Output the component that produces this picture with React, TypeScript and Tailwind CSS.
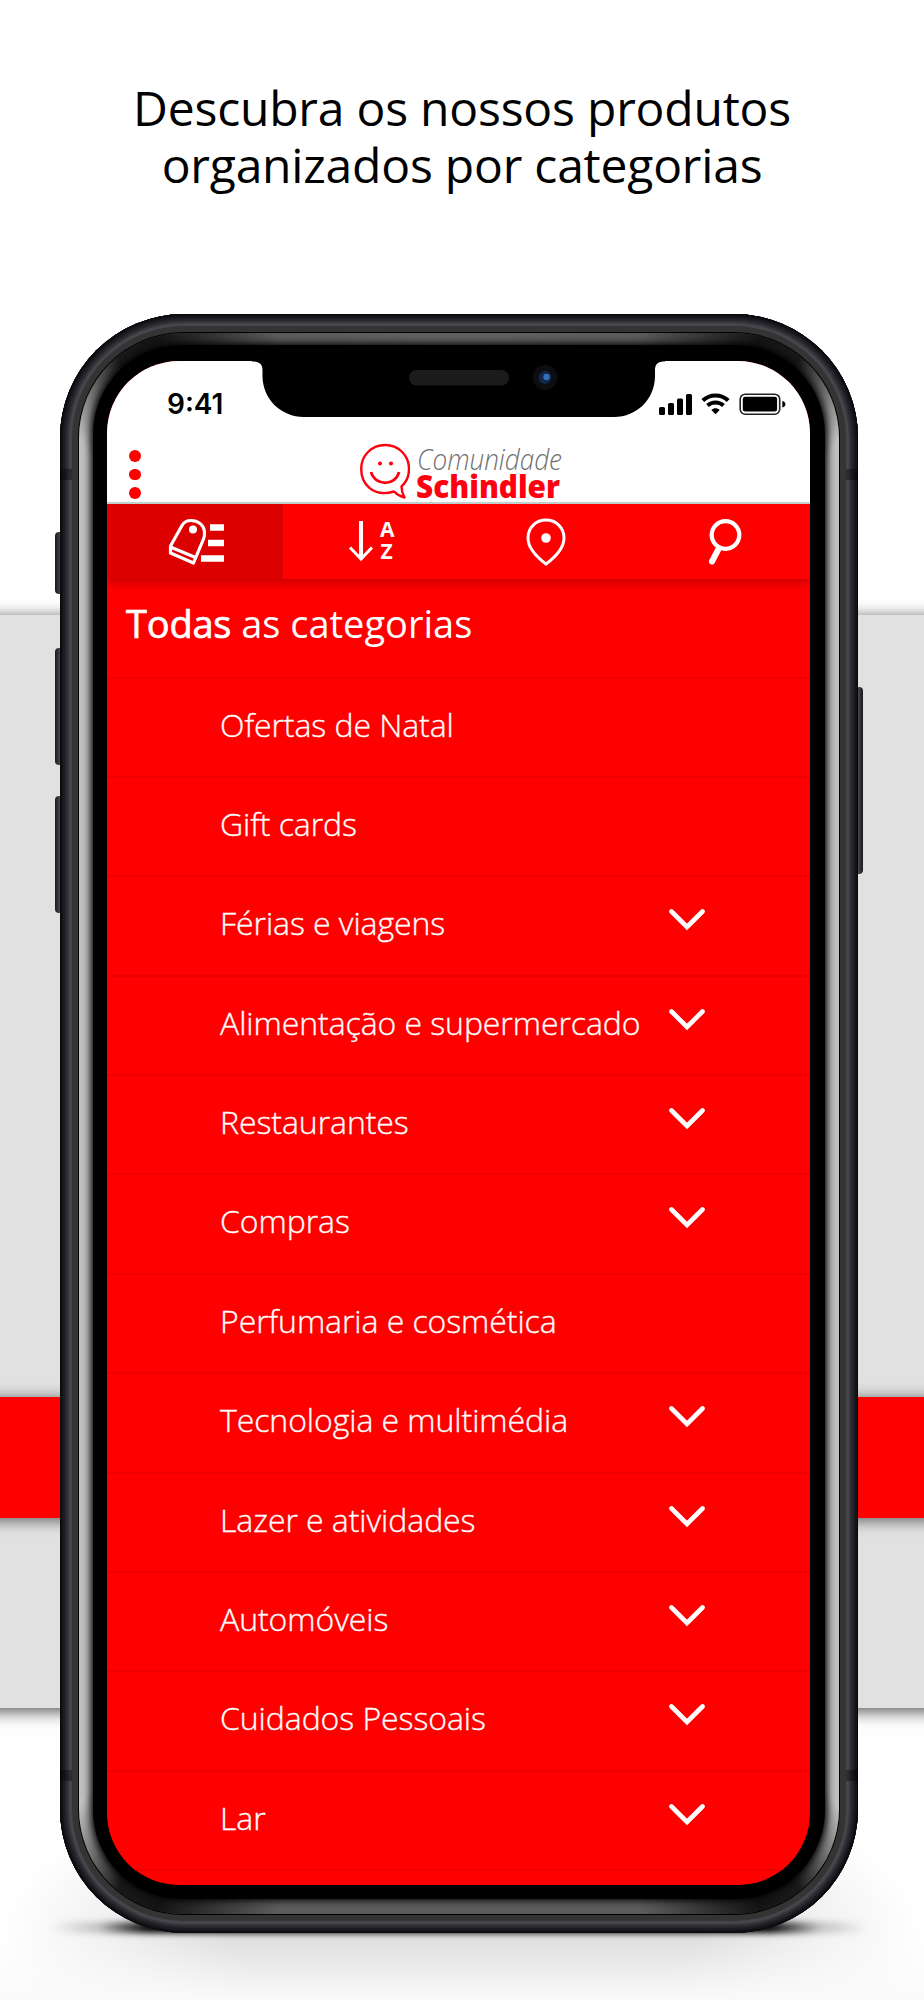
import React from 'react'

type Category = { name: string; expandable?: boolean }

const categories: Category[] = [
  { name: 'Ofertas de Natal' },
  { name: 'Gift cards' },
  { name: 'Férias e viagens', expandable: true },
  { name: 'Alimentação e supermercado', expandable: true },
  { name: 'Restaurantes', expandable: true },
  { name: 'Compras', expandable: true },
  { name: 'Perfumaria e cosmética' },
  { name: 'Tecnologia e multimédia', expandable: true },
  { name: 'Lazer e atividades', expandable: true },
  { name: 'Automóveis', expandable: true },
  { name: 'Cuidados Pessoais', expandable: true },
  { name: 'Lar', expandable: true },
]

const Notch: React.FC = () => (
  <svg className="absolute left-[145px] top-0" width="413" height="57" viewBox="0 0 413 57">
    <path d="M0 0H413V0.5C406 0.5 403 3 403 9V15C403 38 385 56 362 56H52C29 56 10.500 38 10.500 15V9C10.500 3 7 0.500 0 0.500Z" fill="#000" />
    <rect x="157" y="9" width="100" height="15.500" rx="7.750" fill="#1b1b1b" />
    <circle cx="293" cy="16.500" r="12.500" fill="#0c0d10" />
    <circle cx="293" cy="16.500" r="6.500" fill="#12264a" />
    <circle cx="294.500" cy="16" r="3.200" fill="#2f70b8" />
  </svg>
)

const StatusIcons: React.FC = () => (
  <svg width="128" height="24" viewBox="0 0 128 24" fill="#000">
    <rect x="0" y="14" width="6" height="8" rx="1.500" />
    <rect x="9" y="10" width="6" height="12" rx="1.500" />
    <rect x="18" y="5.500" width="6" height="16.500" rx="1.500" />
    <rect x="27" y="1" width="6" height="21" rx="1.500" />
    <path d="M43.800 7.500C51 .8 62 .8 69.200 7.500" fill="none" stroke="#000" strokeWidth="4.200" />
    <path d="M48.500 12.500C53 8.500 60 8.500 64.500 12.500" fill="none" stroke="#000" strokeWidth="4" />
    <path d="M52.300 17C54.800 14.800 58.200 14.800 60.700 17L56.500 21.200Z" />
    <rect x="81.200" y="1.200" width="39.500" height="20" rx="5" fill="none" stroke="#222" strokeWidth="1.600" />
    <rect x="83.800" y="3.800" width="34.300" height="14.800" rx="2.500" />
    <path d="M123.300 8C127.500 9 127.500 13.500 123.300 14.500Z" />
  </svg>
)

const Logo: React.FC = () => (
  <div className="flex gap-1.5">
    <svg className="mt-0.5" width="50" height="56" viewBox="0 0 50 56" fill="none" stroke="#ff0010" strokeWidth="2.400">
      <path d="M34 48.500C12 55 1.200 40 1.200 26C1.200 12 12 2 25.200 2C38 2 49 12 49 26C49 34 46 39.500 41.500 43.500C41.500 48 42.500 51 44.500 54.500C40 53.500 37 51.500 34 48.500Z" strokeLinejoin="round" />
      <path d="M11 29C15 43.500 35.500 43.500 39 29" strokeWidth="2.800" />
      <circle cx="20" cy="20.500" r="2" fill="#ff0010" stroke="none" />
      <circle cx="31" cy="20.500" r="2" fill="#ff0010" stroke="none" />
    </svg>
    <svg className="overflow-visible" width="150" height="60" viewBox="0 0 150 60">
      <text x="1" y="29" textLength="145" lengthAdjust="spacingAndGlyphs" className="fill-[#707070] font-['Open_Sans'] text-[29px] font-light italic">Comunidade</text>
      <text x="0" y="57" textLength="144" lengthAdjust="spacingAndGlyphs" className="fill-[#ff0010] font-['Open_Sans'] text-[31px] font-extrabold">Schindler</text>
    </svg>
  </div>
)

const TagsIcon: React.FC = () => (
  <svg width="56" height="48" viewBox="0 0 56 48" fill="none" stroke="#fff" strokeWidth="3.200">
    <path d="M2.500 28L14 7.500C16 4 19 2.500 23 2.500C30 2.500 36 7 36.500 14C36.700 17 36.500 19 35.500 21L25.500 45L2.500 35Z" strokeLinejoin="round" />
    <path d="M2.500 29L27.500 39.500" />
    <circle cx="25" cy="11.500" r="4" fill="#fff" stroke="none" />
    <path d="M42 9.500H56M40 25H56M33 40.500H56" strokeWidth="6.500" />
  </svg>
)

const SortIcon: React.FC = () => (
  <svg className="overflow-visible" width="47" height="42" viewBox="0 0 47 42" fill="none" stroke="#fff" strokeWidth="3">
    <path d="M12 0V38" strokeWidth="4" />
    <path d="M1 26.500L12 38L23 26.500" />
    <text x="31" y="15.500" className="fill-white stroke-none font-['Open_Sans'] text-[21px] font-bold">A</text>
    <text x="31.500" y="37.500" className="fill-white stroke-none font-['Open_Sans'] text-[21px] font-bold">Z</text>
  </svg>
)

const PinIcon: React.FC = () => (
  <svg width="40" height="48" viewBox="0 0 40 48" fill="none" stroke="#fff" strokeWidth="3">
    <path d="M20 46C10 38.500 2 29 2 20C2 9.500 10 2 20 2C30 2 38 9.500 38 20C38 29 30 38.500 20 46Z" />
    <circle cx="20" cy="20" r="4.800" fill="#fff" stroke="none" />
  </svg>
)

const SearchIcon: React.FC = () => (
  <svg width="34" height="48" viewBox="0 0 34 48" fill="none" stroke="#fff">
    <circle cx="17.500" cy="17" r="13.800" strokeWidth="4.200" />
    <path d="M10.500 31L4 43.500" strokeWidth="6" strokeLinecap="round" />
  </svg>
)

const Chevron: React.FC = () => (
  <svg width="36" height="22" viewBox="0 0 36 22" fill="none" stroke="#fff" strokeWidth="4.600">
    <path d="M2.500 2.500L18 18L33.500 2.500" strokeLinecap="round" />
  </svg>
)

const CategoryRow: React.FC<{ category: Category }> = ({ category }) => (
  <div className="flex h-[99.4px] shrink-0 items-start justify-between border-t-2 border-[#ee0000] pl-[113px] pr-[105px]">
    <p className="pt-[24px] text-[32px] font-light leading-[44px] tracking-[-0.07px] whitespace-nowrap [-webkit-text-stroke:0.35px_white]">{category.name}</p>
    {category.expandable && <div className="pt-[32px]"><Chevron /></div>}
  </div>
)

const Screen: React.FC = () => (
  <div className="relative flex h-[1524px] w-[703px] flex-col overflow-hidden rounded-[72px] bg-[#ff0000] text-white">
    <div className="flex h-[143px] shrink-0 flex-col border-b-2 border-[#c9d6d6] bg-white">
      <div className="flex h-[80px] items-start justify-between pl-[60px] pr-[23px]">
        <p className="pt-[26px] font-['Inter'] text-[28px] font-semibold leading-[34px] text-black">9:41</p>
        <div className="pt-[32px]"><StatusIcons /></div>
      </div>
      <div className="flex items-start">
        <div className="flex w-[253px] flex-col gap-[7px] pl-[22px] pt-[9px]">
          <span className="size-[11.5px] rounded-full bg-[#ff0000]" />
          <span className="size-[11.5px] rounded-full bg-[#ff0000]" />
          <span className="size-[11.5px] rounded-full bg-[#ff0000]" />
        </div>
        <Logo />
      </div>
    </div>
    <div className="z-10 grid h-[75px] shrink-0 grid-cols-4 bg-[#ff0000] shadow-[0_4px_9px_rgba(0,0,0,0.22)]">
      <div className="flex bg-[#dc0000] pl-[61px] pt-[14px]"><TagsIcon /></div>
      <div className="flex pl-[66px] pt-[17px]"><SortIcon /></div>
      <div className="flex pl-[67px] pt-[14px]"><PinIcon /></div>
      <div className="flex pl-[74px] pt-[14px]"><SearchIcon /></div>
    </div>
    <div className="h-[97.5px] shrink-0 pl-[19px] pt-[18px] text-[38px] leading-[52px] whitespace-nowrap">
      <span className="tracking-[-0.2px] [-webkit-text-stroke:0.7px_white]">Todas</span> as categorias
    </div>
    {categories.map((category) => <CategoryRow key={category.name} category={category} />)}
    <div className="border-t-2 border-[#ee0000]" />
    <Notch />
  </div>
)

const Phone: React.FC = () => (
  <div className="relative h-[1619px] w-[798px]">
    {/* side buttons */}
    <div className="absolute -left-[5px] top-[218px] h-[62px] w-3 rounded-l-sm bg-linear-to-r from-[#18191c] via-[#4c4c52] to-[#18191c]" />
    <div className="absolute -left-[5px] top-[334px] h-[117px] w-3 rounded-l-sm bg-linear-to-r from-[#18191c] via-[#55555b] to-[#18191c]" />
    <div className="absolute -left-[5px] top-[482px] h-[117px] w-3 rounded-l-sm bg-linear-to-r from-[#18191c] via-[#55555b] to-[#18191c]" />
    <div className="absolute -right-[5px] top-[373px] h-[187px] w-3 rounded-r-sm bg-linear-to-l from-[#18191c] via-[#55555b] to-[#18191c]" />

    {/* steel band, then the glass bevel, then the black bezel */}
    <div className="relative h-full rounded-[124px] bg-[#333534] p-[19px] shadow-[inset_0_0_0_1px_#08080c,inset_0_0_0_3px_#121216,inset_0_0_0_5px_#1c1c22,inset_0_0_0_7px_#26262c,inset_0_0_0_9px_#343439,inset_0_0_0_12px_#45454b]">
      <div className="h-full rounded-[105px] bg-[conic-gradient(#606060_0deg,#5a5a5a_13deg,#141414_21deg,#1a1a1a_24deg,#c0c0c0_29deg,#c0c0c0_151deg,#1a1a1a_156deg,#141414_159deg,#5c5c5c_167deg,#5c5c5c_193deg,#141414_201deg,#1a1a1a_204deg,#c0c0c0_209deg,#c0c0c0_331deg,#1a1a1a_336deg,#141414_339deg,#5a5a5a_347deg,#606060_360deg)] px-[14px] pt-[12px] pb-[15px] shadow-[0_0_0_1px_#000]">
        <div className="h-full rounded-[89px] bg-black px-[14px] pt-[16px] pb-[13px] shadow-[-3px_0_9px_-1px_#000,3px_0_9px_-1px_#000]">
          <Screen />
        </div>
      </div>
    </div>
    <div className="absolute left-0 top-[155px] h-[11px] w-3 bg-black/35" />
    <div className="absolute right-0 top-[155px] h-[11px] w-3 bg-black/35" />
    <div className="absolute left-0 top-[1456px] h-[11px] w-3 bg-black/35" />
    <div className="absolute right-0 top-[1456px] h-[11px] w-3 bg-black/35" />
  </div>
)

const Backdrop: React.FC = () => (
  <div className="absolute inset-0 flex flex-col pt-[615px]">
    <div className="-mx-8 flex h-[1093px] shrink-0 flex-col bg-[#e1e1e1] pt-[782px] shadow-[0_3px_16px_rgba(0,0,0,0.7)]">
      <div className="h-[121px] bg-[#ff0000] shadow-[0_2px_14px_rgba(0,0,0,0.6)]" />
    </div>
    <div className="relative flex-1">
      <div className="absolute inset-x-0 top-[40px] h-[252px] bg-[radial-gradient(ellipse_50%_70%_at_50%_74%,#dcdcdc_50%,#f3f3f3_80%,transparent)]" />
      <div className="absolute inset-x-0 top-[225px] h-[67px] bg-linear-to-b from-transparent to-[#fafafa]" />
      <div className="absolute left-[50px] top-[214px] h-[11px] w-[818px] bg-[linear-gradient(to_right,transparent,rgba(0,0,0,0.2)_6%,#000_12%,#000_88%,rgba(0,0,0,0.2)_94%,transparent)] blur-[3px]" />
    </div>
  </div>
)

const App: React.FC = () => {
  return (
    <div className="relative h-[2000px] w-[924px] overflow-hidden bg-white font-['Open_Sans',sans-serif]">
      <Backdrop />
      <div className="relative flex flex-col">
        <h1 className="flex h-[314px] flex-col items-center pt-[80px] text-[48px] leading-[56.5px] tracking-[-0.2px] text-black whitespace-nowrap">
          <span>Descubra os nossos produtos</span>
          <span>organizados por categorias</span>
        </h1>
        <div className="pl-[60px]">
          <Phone />
        </div>
      </div>
    </div>
  )
}

export default App
